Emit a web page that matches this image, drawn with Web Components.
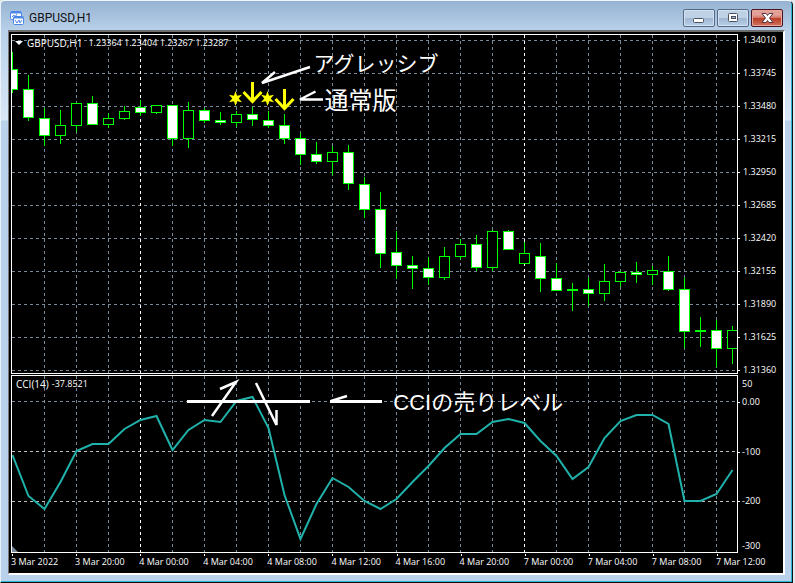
<!DOCTYPE html>
<html lang="ja">
<head>
<meta charset="utf-8">
<title>GBPUSD,H1</title>
<style>
html,body{margin:0;height:100%;background:#e4e8ec}
body{font-family:"Open Sans","Noto Sans","Noto Sans CJK JP",sans-serif}
</style>
</head>
<body>
<chart-window heading="GBPUSD,H1">
  <price-pane slot="main">
    <chart-note style="--x:41.6%;--y:4%;--size:21px">アグレッシブ</chart-note>
    <chart-note style="--x:43.1%;--y:15%;--size:24px">通常版</chart-note>
  </price-pane>
  <cci-pane slot="main">
    <chart-note style="--x:52.6%;--y:7%;--size:22px">CCIの売りレベル</chart-note>
  </cci-pane>
  <time-axis slot="main"></time-axis>
</chart-window>
<script>
const make=(name,html,init)=>customElements.define(name,class extends HTMLElement{
  constructor(){super();this.attachShadow({mode:'open'}).innerHTML=typeof html==='function'?html():html}
  connectedCallback(){if(init)init.call(this,this.shadowRoot)}
});

make('window-button',`<style>
:host{display:block;width:32px;height:18px}
button{display:grid;place-items:center;width:100%;height:100%;padding:0;border:1px solid #566a86;border-radius:2px;box-shadow:inset 0 0 0 1px #d3e2f2;background:linear-gradient(#bfd1e5 0 48%,#9db5d0 50%,#b8d0e8)}
:host([kind=close]) button{border-color:#4b1420;box-shadow:inset 0 0 0 1px #e5a79f;background:linear-gradient(#e2a097 0 30%,#d5796b 47%,#bb3b24 50%,#d0745f)}
svg{display:block}
</style><button type="button"><svg width="18" height="14" viewBox="0 0 18 14" aria-hidden="true"></svg></button>`,function(r){
  const k=this.getAttribute('kind');
  r.querySelector('button').setAttribute('aria-label',k);
  r.querySelector('svg').innerHTML={
    minimize:'<rect x="3.5" y="7.5" width="10" height="4" rx="1" fill="#fff" stroke="#4a5260"/>',
    maximize:'<rect x="4.5" y="2.5" width="9" height="8" rx="1" fill="#fff" stroke="#4a5260"/><rect x="7.5" y="5.5" width="4" height="2" fill="#9bb2cd" stroke="#4a5260"/>',
    close:'<path d="M4 2.500h4l1.500 2L11 2.500h4L11.500 7l3.500 4.500h-4L9.500 9.500 8 11.500H4L7.500 7z" fill="#fff" stroke="#563842"/>'}[k];
});

make('chart-window',`<style>
:host{display:flex;flex-direction:column;box-sizing:border-box;min-height:100vh;padding:0 7px;padding-bottom:7px;margin-right:2px;border:1px solid #111;border-left-color:#e9f2fb;border-top-color:#eef5fc;border-radius:5px 5px 0 0;background:linear-gradient(#97b3d1 0,#b9d1ea 30px,#d9e7f6 119px,#b9d1ea 120px);box-shadow:inset -1px -1px #2cb4d6}
header{display:flex;align-items:center;gap:4px;height:29px;padding:5px 0 0 1px;box-sizing:border-box}
h1{flex:1;margin:0;font:400 12px/16px Roboto,sans-serif;color:#111}
nav{display:flex;gap:2px;padding-right:2px}
main{flex:1;display:grid;grid-template-rows:340fr 178fr 19fr;row-gap:1px;padding:2px 0 0 2px;background:#000;border:1px solid #fff;border-color:#6d6d6d #fff #fff #777;border-width:2px 2px 2px 1px}
</style>
<header><svg width="16" height="16" viewBox="0 0 16 16" aria-hidden="true"><g fill="#fff" stroke="#4b86e8"><rect x="1.5" y="1.5" width="11" height="8" rx="1"/><path d="M2 2.500h10" stroke-width="2"/><path d="M3 7l2-2 1 2 2-3" fill="none"/><rect x="4.500" y="6.500" width="10" height="8" rx="1"/><path d="M5 7.500h9" stroke-width="2"/><path d="M6 10l2 3 2-3 1 3 2-3" fill="none"/></g></svg><h1></h1>
<nav><window-button kind="minimize"></window-button><window-button kind="maximize"></window-button><window-button kind="close"></window-button></nav></header>
<main><slot name="main"></slot></main>`,function(r){r.querySelector('h1').textContent=this.getAttribute('heading')});

make('chart-note',`<style>:host{position:absolute;left:var(--x);top:var(--y);font:400 var(--size)/30px "Liberation Sans","Noto Sans CJK JP",sans-serif;color:#fff;white-space:nowrap}</style><slot></slot>`);

const paneStyle=`:host{display:grid;grid-template-columns:minmax(0,1fr) 45px;min-height:0;color:#fff;font-size:9px;line-height:12px}
.plot{position:relative;box-sizing:border-box;border:1px solid #fff;min-height:0;overflow:hidden}
.plot>svg{position:absolute;inset:0;width:100%;height:100%;display:block}
.grid{stroke:#778899;stroke-dasharray:3 3;fill:none}
.head{position:absolute;left:4px;top:2px;display:flex;align-items:center;gap:5px;white-space:pre}
.name{font-size:10px}`;

const verticals=(top,h)=>{let s='';for(let x=44;x<737;x+=32)s+=`<path d="M${x+.5} ${top}v${h}" ${x===140||x===524?'style="stroke:#fff"':''}/>`;return s};

/* high, body top, body bottom, low, filled */
const candles=[[52,69,89,92,1],[75,89,117,120,1],[108,118,135,145,1],[110,125,135,143],[103,103,125,131],[96,103,124,124,1],[113,118,124,127],[106,111,118,119],[100,107,112,115,1],[105,105,112,113],[105,105,138,145,1],[102,110,138,147],[108,110,120,122,1],[112,120,122,124,1],[111,114,122,126],[107,114,119,125,1],[111,120,125,127,1],[114,125,138,143,1],[133,138,154,164,1],[142,154,161,163,1],[146,152,161,174],[145,152,183,189,1],[177,184,209,217,1],[192,209,253,267,1],[231,252,265,278,1],[256,265,268,288,1],[257,268,277,284,1],[247,256,277,279],[239,244,256,258],[235,244,267,270,1],[230,231,267,270],[230,231,249,249,1],[242,253,263,263],[243,256,278,291,1],[263,278,290,290,1],[283,289,290,310],[278,289,293,305,1],[264,281,293,300],[271,272,281,286],[262,272,274,282,1],[266,270,274,284],[256,271,289,290,1],[278,289,331,347,1],[317,330,331,346],[320,330,348,366,1],[326,330,348,363]];

const star=(cx,cy)=>{let d='';for(let i=0;i<12;i++){const r=i%2?3.2:7.5,a=Math.PI*i/6;d+=`${i?'L':'M'}${(cx+r*Math.sin(a)).toFixed(1)} ${(cy-r*Math.cos(a)).toFixed(1)}`}return `<path d="${d}z"/>`};

make('price-pane',()=>{
  let g='';for(let y=40;y<372;y+=33)g+=`<path d="M12 ${y+.5}h725"/>`;
  const c=candles.map(([h,t,b,l,f],i)=>{const x=12.5+16*i;return `<path d="M${x} ${h}V${l+1}"/><rect x="${x-5}" y="${t+.5}" width="10" height="${b-t}" fill="${f?'#fff':'#000'}"/>`}).join('');
  let p='';for(let i=0;i<11;i++)p+=`<span>${(1.3401-i*.00265).toFixed(5)}</span>`;
  return `<style>${paneStyle}
.axis{display:flex;flex-direction:column;justify-content:space-between;margin-bottom:-2px}
.axis span{display:flex;align-items:center;gap:3px}.axis span::before{content:"";width:2px;height:1px;background:#fff}
.tri{width:0;height:0;border:4px solid transparent;border-top-color:#fff;border-bottom:0}.head{left:3px;gap:4px}.name{margin-right:2px}</style>
<div class="plot"><svg viewBox="12 35 725 338" preserveAspectRatio="none" aria-hidden="true"><g class="grid">${g}${verticals(35,338)}</g><g stroke="#0f0">${c}</g>
<g fill="none" stroke="#ff0" stroke-width="3"><path d="M252.500 82v19M243.500 92l9 9.500 9-9.500M284.500 89v19M275.500 99l9 9.500 9-9.500"/></g>
<g fill="#ff0">${star(235.5,98.5)}${star(267.5,98.5)}</g>
<g fill="none" stroke="#fff" stroke-width="2.500"><path d="M310 67l-48 16 13-11M323 99.500h-23l15.500-8"/></g></svg>
<div class="head"><i class="tri"></i><span class="name">GBPUSD,H1</span><span>1.23364 1.23404 1.23267 1.23287</span></div><slot></slot></div><div class="axis">${p}</div>`});

const cci=[455,496,509,482,451,444,444,429,420,416,450,430,420,422,401,397,428,495,539,504,478,487,501,509,499,482,466,448,434,434,422,419,423,441,456,479,467,438,421,415,415,424,501,501,494,470];

make('cci-pane',()=>`<style>${paneStyle}
.head{gap:3px}
.axis{position:relative}
.axis span{position:absolute;left:4px;transform:translateY(-50%)}
.axis .t::before{content:"";position:absolute;left:-4px;top:6px;width:2px;height:1px;background:#fff}</style>
<div class="plot"><svg viewBox="12 376 725 176" preserveAspectRatio="none" aria-hidden="true"><g class="grid"><path d="M12 401.500h725"/><path style="stroke:#c0c0c0" d="M12 451.500h725M12 501.500h725"/>${verticals(376,176)}</g>
<polyline fill="none" stroke="#20b2aa" stroke-width="2" points="${cci.map((y,i)=>(12.5+16*i)+','+y).join(' ')}"/>
<path d="M12 546l6 6h-6z" fill="#778899"/>
<g fill="none" stroke="#fff"><path stroke-width="3" d="M187 401.500h123M330 401.500h52"/><path stroke-width="2.500" d="M331 401l16-5M212 416l24-34-16 7M256 383l20.500 42v-15"/></g></svg>
<div class="head"><span class="name">CCI(14)</span><span>-37.8521</span></div><slot></slot></div>
<div class="axis"><span style="top:5%">50</span><span class="t" style="top:15%">0.00</span><span class="t" style="top:43%">-100</span><span class="t" style="top:71%">-200</span><span style="top:96%">-300</span></div>`);

make('time-axis',()=>`<style>:host{display:grid;grid-template-columns:repeat(12,minmax(0,1fr));font-size:9px;line-height:12px;color:#fff;margin-right:3px}
span{white-space:nowrap}span::before{content:"";display:block;width:1px;height:2px;margin-left:1px;background:#fff}</style>${['3 Mar 2022','3 Mar 20:00','4 Mar 00:00','4 Mar 04:00','4 Mar 08:00','4 Mar 12:00','4 Mar 16:00','4 Mar 20:00','7 Mar 00:00','7 Mar 04:00','7 Mar 08:00','7 Mar 12:00'].map(t=>`<span>${t}</span>`).join('')}`);
</script>
</body>
</html>
